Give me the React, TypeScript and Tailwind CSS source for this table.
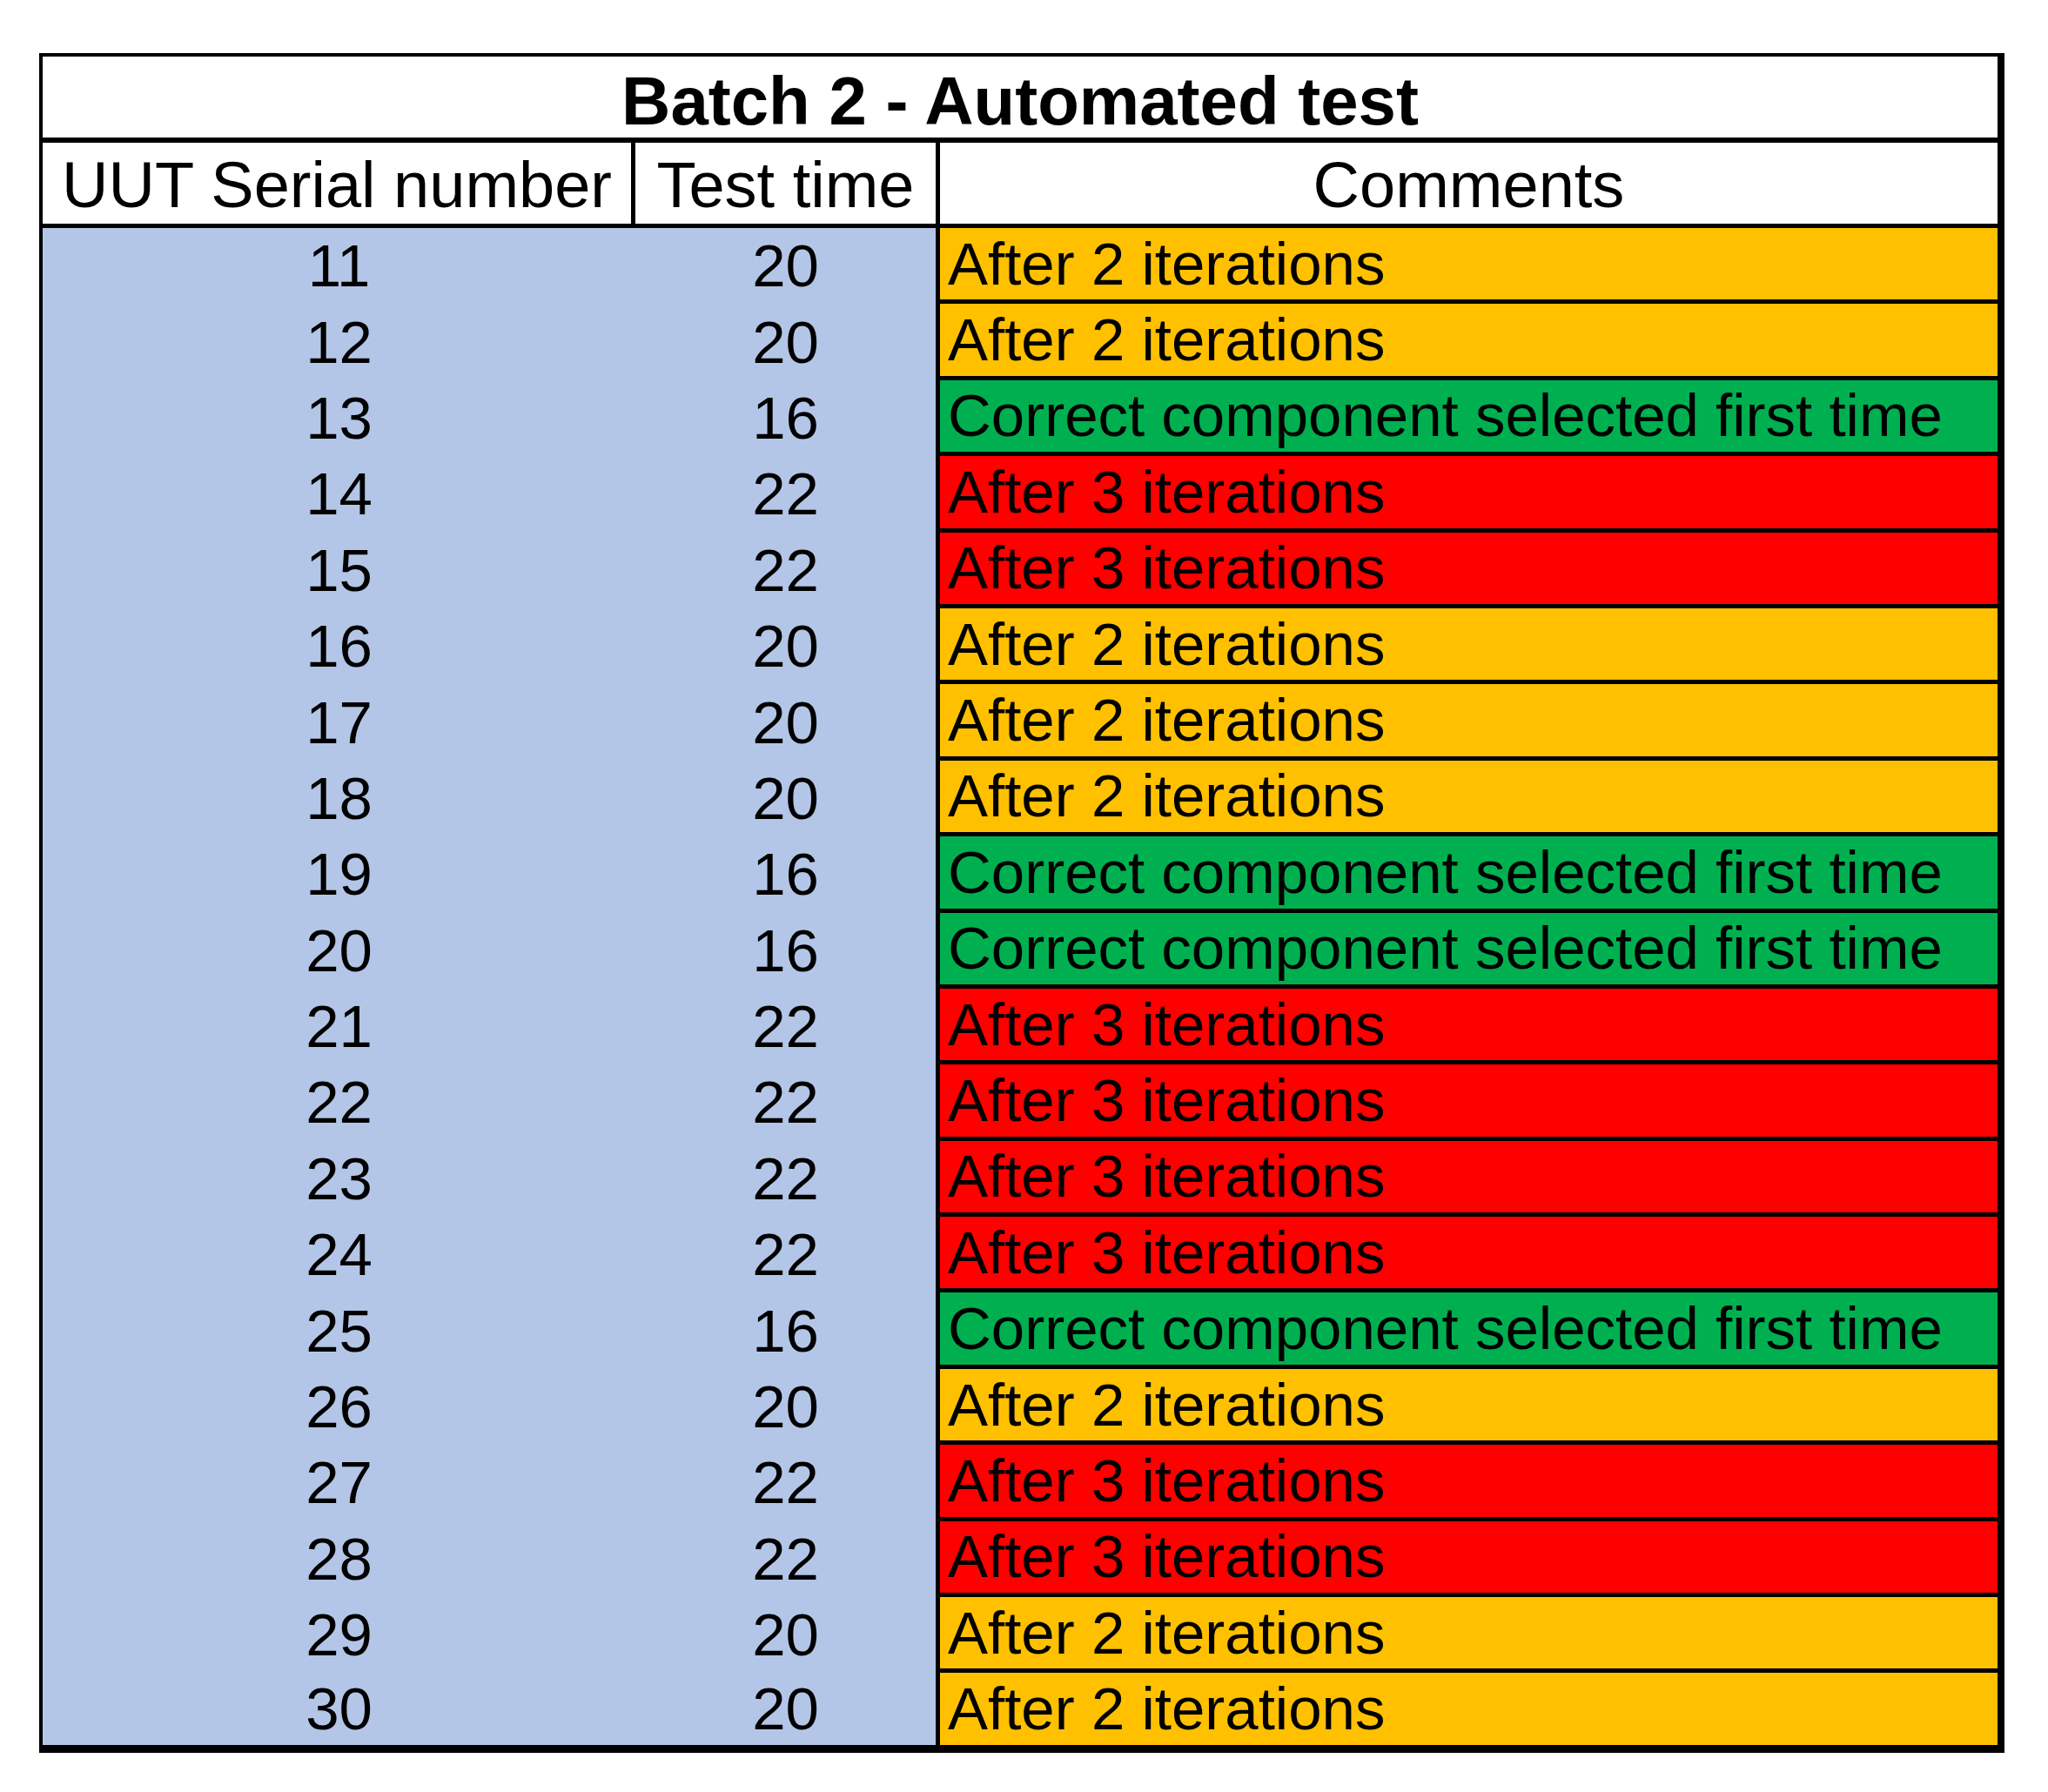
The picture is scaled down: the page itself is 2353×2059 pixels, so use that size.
const filas: [number, number][] = [
  [11, 20],
  [12, 20],
  [13, 16],
  [14, 22],
  [15, 22],
  [16, 20],
  [17, 20],
  [18, 20],
  [19, 16],
  [20, 16],
  [21, 22],
  [22, 22],
  [23, 22],
  [24, 22],
  [25, 16],
  [26, 20],
  [27, 22],
  [28, 22],
  [29, 20],
  [30, 20],
];

// El tiempo de prueba decide el comentario y su color.
function comentario(tiempo: number) {
  if (tiempo === 16)
    return { texto: "Correct component selected first time", color: "bg-[#00B050]" };
  if (tiempo === 22) return { texto: "After 3 iterations", color: "bg-[#FF0000]" };
  return { texto: "After 2 iterations", color: "bg-[#FFC000]" };
}

export default function App() {
  return (
    <div className="min-h-screen bg-white pl-[45px] pt-[61px]">
      <div className="w-[2258px] border-t-4 border-l-4 border-r-8 border-b-[9px] border-black font-['Liberation_Sans',Arial,sans-serif] text-black leading-none">
        <div className="flex h-[99px] items-center justify-center border-b-[6px] border-black pt-[8px] text-[78px] font-bold">
          Batch 2 - Automated test
        </div>

        <div className="flex h-[98px] border-b-[5px] border-black text-[74px]">
          <div className="flex w-[681px] items-center justify-center border-r-[5px] border-black pt-[5px]">
            UUT Serial number
          </div>
          <div className="flex w-[350px] items-center justify-center border-r-[5px] border-black pt-[5px]">
            Test time
          </div>
          <div className="flex flex-1 items-center justify-center pt-[5px]">Comments</div>
        </div>

        {filas.map(([serie, tiempo], i) => {
          const c = comentario(tiempo);
          const ultima = i === filas.length - 1;
          return (
            <div
              key={serie}
              className={`flex text-[69px] ${ultima ? "h-[82.4px]" : "h-[87.4px]"}`}
            >
              <div className="flex w-[681px] items-center justify-center bg-[#B4C6E7]">
                {serie}
              </div>
              <div className="flex w-[350px] items-center justify-center border-r-[5px] border-black bg-[#B4C6E7]">
                {tiempo}
              </div>
              <div
                className={`flex flex-1 items-center pl-[9px] ${c.color} ${
                  ultima ? "" : "border-b-[5px] border-black"
                }`}
              >
                {c.texto}
              </div>
            </div>
          );
        })}
      </div>
    </div>
  );
}
